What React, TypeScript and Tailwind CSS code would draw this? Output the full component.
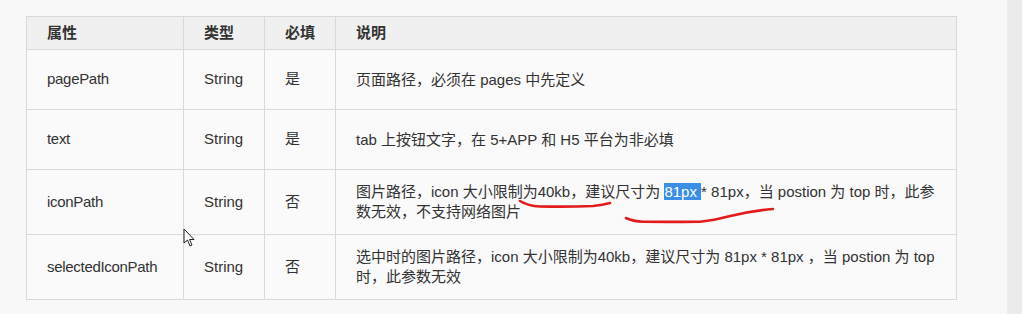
import React from "react";

const font = { fontFamily: '"Liberation Sans", Arial, "Noto Sans CJK SC", sans-serif' };

const rows: { name: string; type: string; req: string; desc: React.ReactNode; h: string }[] = [
  { name: "pagePath", type: "String", req: "是", desc: "页面路径，必须在 pages 中先定义", h: "h-[60px]" },
  { name: "text", type: "String", req: "是", desc: "tab 上按钮文字，在 5+APP 和 H5 平台为非必填", h: "h-[60px]" },
  {
    name: "iconPath",
    type: "String",
    req: "否",
    desc: (
      <>
        图片路径，icon 大小限制为40kb，建议尺寸为 <span className="bg-[#3a8ee6] text-white">81px </span>* 81px，当 postion 为 top 时，此参数无效，不支持网络图片
      </>
    ),
    h: "h-[65px]",
  },
  {
    name: "selectedIconPath",
    type: "String",
    req: "否",
    desc: "选中时的图片路径，icon 大小限制为40kb，建议尺寸为 81px * 81px ，当 postion 为 top 时，此参数无效",
    h: "h-[65px]",
  },
];

export default function App() {
  return (
    <div className="relative flex w-[1022px] h-[314px] bg-[#f8f8f8] overflow-hidden" style={font}>
      <div className="flex-1 pt-[16px] pl-[26px]">
        <table className="border-collapse text-[15px] text-[#333] w-[930px] table-fixed bg-[#fafafa]">
          <colgroup>
            <col className="w-[157px]" />
            <col className="w-[81px]" />
            <col className="w-[71px]" />
            <col className="w-[621px]" />
          </colgroup>
          <thead>
            <tr className="h-[33px] bg-[#f0f0f0]">
              {["属性", "类型", "必填", "说明"].map((t) => (
                <th key={t} className="border border-[#d9d9d9] pl-[20px] text-left font-bold text-[#333] align-middle">
                  {t}
                </th>
              ))}
            </tr>
          </thead>
          <tbody>
            {rows.map((r) => (
              <tr key={r.name} className={r.h}>
                <td className="border border-[#d9d9d9] pl-[20px] align-middle tracking-[-0.3px]">{r.name}</td>
                <td className="border border-[#d9d9d9] pl-[20px] align-middle">{r.type}</td>
                <td className="border border-[#d9d9d9] pl-[20px] align-middle">{r.req}</td>
                <td className="border border-[#d9d9d9] pl-[20px] pr-[16px] align-middle leading-[20px]">{r.desc}</td>
              </tr>
            ))}
          </tbody>
        </table>
      </div>
      <div className="w-[15px] bg-[#ececec]" />
      <svg className="absolute left-0 top-0 pointer-events-none" width="1022" height="314">
        <path d="M520 201 Q528 206 540 206.5 Q570 207 593 206 Q603 205 610 203" stroke="#e31b1b" strokeWidth="2.6" fill="none" strokeLinecap="round" />
        <path d="M626 218 Q633 221.5 643 221.7 Q680 222 700 221.7 Q715 220 727 216.7 Q750 211 773 209" stroke="#e31b1b" strokeWidth="2.6" fill="none" strokeLinecap="round" />
        <path d="M184 229 L184 243 L187.5 240 L190 246 L192 245 L189.5 239.5 L194 239.5 Z" fill="#fff" stroke="#222" strokeWidth="1" strokeLinejoin="round" />
      </svg>
    </div>
  );
}
